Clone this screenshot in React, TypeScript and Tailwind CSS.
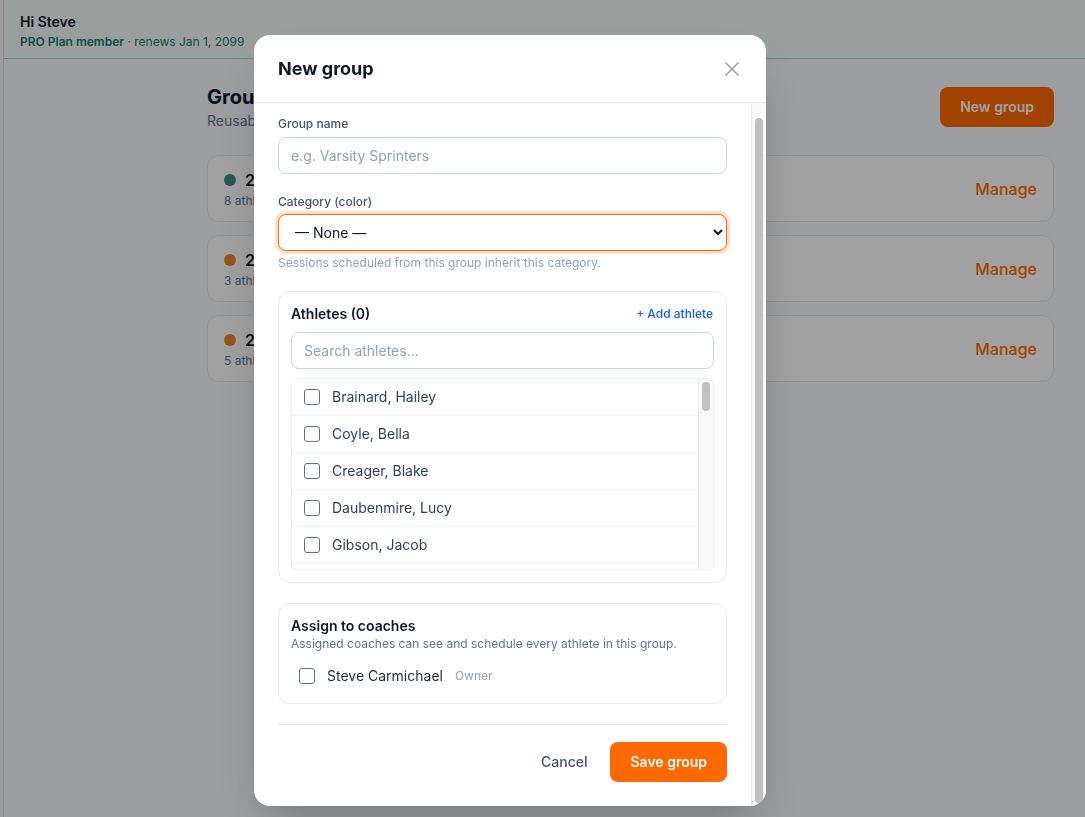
import { X } from 'lucide-react'

const groups = [
  { name: '2025 Varsity Sprinters', count: 8, dot: 'bg-[#3f8c81]' },
  { name: '2025 Distance Crew', count: 3, dot: 'bg-[#f08a2c]' },
  { name: '2025 Jumps & Throws', count: 5, dot: 'bg-[#f08a2c]' },
]

const athletes = [
  'Brainard, Hailey', 'Coyle, Bella', 'Creager, Blake', 'Daubenmire, Lucy', 'Gibson, Jacob',
  'Hanson, Ava', 'Harper, Liam', 'Jensen, Mia', 'Kowalski, Noah', 'Larsen, Emma',
  'Lindqvist, Owen', 'Lopez, Sofia', 'Marsh, Ethan', 'McCall, Grace', 'Meyer, Lucas',
  'Nguyen, Chloe', 'Novak, Henry', 'Olsen, Ella', 'Parker, Mason', 'Quinn, Harper',
  'Reed, Logan', 'Rios, Aria', 'Schmidt, Caleb', 'Shaw, Zoe', 'Stone, Wyatt',
  'Sullivan, Nora', 'Thompson, Jack', 'Turner, Lily', 'Vance, Eli', 'Walsh, Ruby',
  'Webb, Carter', 'Young, Stella', 'Zimmer, Miles',
]

function Checkbox() {
  return (
    <input type="checkbox" readOnly
      className="appearance-none w-4 h-4 shrink-0 rounded-[3px] border border-[#64748b] bg-white" />
  )
}

function Track({ thumbClass }: { thumbClass: string }) {
  return (
    <div className="w-[15px] shrink-0 bg-[#fafafa] border-l border-[#e8e8e8] flex justify-center">
      <div className={`w-2 rounded-full bg-[#c1c1c1] ${thumbClass}`} />
    </div>
  )
}

export default function App() {
  return (
    <div className="min-h-screen bg-[#f8fafc] font-['Inter',sans-serif] text-slate-900">
      <div className="ml-[3px] min-h-screen border-l border-[#d4d8dc]">
        {/* Top bar */}
        <div className="h-[59px] px-4 pt-[12px] bg-[#f3fcf8] border-b border-[#9fcfc6]">
          <div className="text-sm font-semibold leading-5 text-slate-900">Hi Steve</div>
          <div className="text-xs leading-4 mt-[2px] text-[#237a6f]">
            <span className="font-semibold">PRO Plan member</span> · renews Jan 1, 2099
          </div>
        </div>

        {/* Groups page */}
        <div className="pl-[203px] pr-[31px] pt-6">
          <div className="flex items-start justify-between">
            <div>
              <h1 className="text-xl font-bold leading-7">Groups</h1>
              <p className="text-sm text-slate-500 leading-5">Reusable athlete lists for faster scheduling.</p>
            </div>
            <button className="mt-1 h-10 px-5 rounded-lg bg-orange-500 text-white text-sm font-semibold">New group</button>
          </div>

          <div className="mt-6 flex flex-col gap-[13px]">
            {groups.map(g => (
              <div key={g.name} className="flex items-center justify-between rounded-xl border border-slate-200 bg-white pl-4 pr-4 py-3">
                <div>
                  <div className="flex items-center gap-[9px]">
                    <span className={`w-3 h-3 rounded-full ${g.dot}`} />
                    <span className="text-base font-semibold leading-6">{g.name}</span>
                  </div>
                  <div className="text-xs text-slate-500 leading-4 mt-[1px]">{g.count} athletes</div>
                </div>
                <button className="text-base font-medium text-orange-500">Manage</button>
              </div>
            ))}
          </div>
        </div>
      </div>

      {/* Modal */}
      <div className="fixed inset-0 bg-black/[0.37] flex justify-center items-start pt-[35px] pr-[65px]">
        <div className="w-[512px] h-[771px] bg-white rounded-2xl shadow-2xl flex flex-col overflow-hidden">
          <div className="h-[68px] shrink-0 flex items-center justify-between pl-6 pr-[22px] border-b border-slate-200">
            <h2 className="text-lg font-bold text-slate-900">New group</h2>
            <X className="w-6 h-6 text-slate-400" strokeWidth={1.5} />
          </div>

          <div className="flex-1 min-h-0 flex">
            <div className="flex-1 min-w-0 overflow-hidden pt-[13px] pb-6 px-6 flex flex-col gap-5">
              <div>
                <label className="block text-xs font-medium leading-4 text-slate-600 mb-[5px]">Group name</label>
                <input placeholder="e.g. Varsity Sprinters"
                  className="w-full h-[37px] rounded-lg border border-slate-300 px-3 text-sm text-slate-900 placeholder:text-slate-400 outline-none" />
              </div>

              <div>
                <label className="block text-xs font-medium leading-4 text-slate-600 mb-[4px]">Category (color)</label>
                <select defaultValue=""
                  className="w-full h-[37px] rounded-lg border border-orange-500 ring-[3px] ring-orange-500/20 bg-white pl-3 pr-1 text-sm text-slate-900 outline-none">
                  <option value="">— None —</option>
                  <option value="sprints">Sprints</option>
                  <option value="distance">Distance</option>
                </select>
                <p className="mt-1 text-xs leading-4 text-slate-400">Sessions scheduled from this group inherit this category.</p>
              </div>

              {/* Athletes */}
              <div className="rounded-xl border border-slate-200 p-3">
                <div className="flex items-center justify-between h-5">
                  <span className="text-sm font-semibold text-slate-900">Athletes (0)</span>
                  <button className="text-xs font-medium text-blue-600 pr-[1px]">+ Add athlete</button>
                </div>
                <input placeholder="Search athletes..."
                  className="mt-2 w-full h-[37px] rounded-lg border border-slate-300 px-3 text-sm placeholder:text-slate-400 outline-none" />
                <div className="mt-[9px] h-[192px] flex rounded-md border border-[#eceef1] overflow-hidden">
                  <div className="flex-1 min-w-0 overflow-hidden">
                    {athletes.map(a => (
                      <label key={a} className="flex items-center gap-3 h-[37px] pl-3 border-b border-[#f1f2f4] text-sm text-slate-700">
                        <Checkbox />
                        <span>{a}</span>
                      </label>
                    ))}
                  </div>
                  <Track thumbClass="mt-[3px] h-[29px]" />
                </div>
              </div>

              {/* Coaches */}
              <div className="rounded-xl border border-slate-200 px-3 pt-3 pb-3">
                <div className="text-sm font-semibold leading-5 text-slate-900">Assign to coaches</div>
                <div className="text-xs leading-4 text-slate-500">Assigned coaches can see and schedule every athlete in this group.</div>
                <label className="mt-[9px] h-[30px] pl-2 flex items-center text-sm text-slate-800">
                  <Checkbox />
                  <span className="ml-3">Steve Carmichael</span>
                  <span className="ml-3 text-xs text-slate-400">Owner</span>
                </label>
              </div>

              {/* Footer */}
              <div className="border-t border-slate-200 pt-[17px] flex items-center justify-end gap-[11px]">
                <button className="px-3 h-10 text-sm font-medium text-slate-600">Cancel</button>
                <button className="h-10 px-5 rounded-lg bg-orange-500 text-white text-sm font-semibold">Save group</button>
              </div>
            </div>
            <Track thumbClass="mt-[15px] mb-[3px]" />
          </div>
        </div>
      </div>
    </div>
  )
}
